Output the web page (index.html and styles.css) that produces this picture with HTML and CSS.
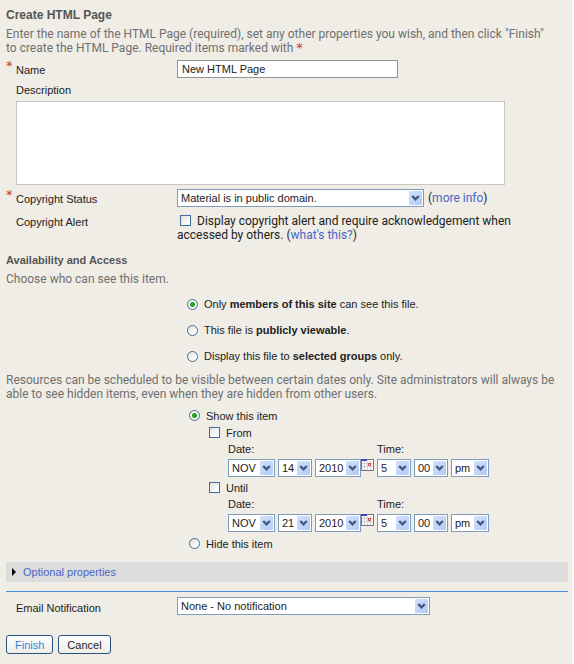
FILE: index.html
```html
<!DOCTYPE html>
<html lang="en">
<head>
<meta charset="utf-8">
<title>Create HTML Page</title>
<link rel="stylesheet" href="styles.css">
</head>
<body>
<svg class="defs" aria-hidden="true">
  <symbol id="arrow" viewBox="0 0 13 14">
    <path d="M3.2 5 L6.5 8.3 L9.8 5" fill="none" stroke="#41587f" stroke-width="2.4"/>
  </symbol>
  <symbol id="calendar" viewBox="0 0 13 12">
    <path d="M0 0H13V12H0Z" fill="#77777d"/>
    <path d="M1 1H12V11H1Z" fill="#fafafa"/>
    <path d="M3.5 2V11M6.5 2V11M9.5 2V11M1 4.5H12M1 7.5H12" stroke="#d2d2d6" fill="none"/>
    <path d="M0 0H6V2H0Z" fill="#4343b5"/>
    <path d="M7.5 4.5H9.5V6.5H7.5Z" fill="#fff" stroke="#c9403c"/>
  </symbol>
</svg>
<form class="page">
  <h3 class="title">Create HTML Page</h3>
  <p class="note">Enter the name of the HTML Page (required), set any other properties you wish, and then click "Finish"<br>to create the HTML Page. Required items marked with <span class="star">*</span></p>

  <div class="row name-row">
    <label for="name"><span class="star mark">*</span>Name</label>
    <input class="text" id="name" type="text" value="New HTML Page">
  </div>
  <div class="description">
    <label for="description">Description</label>
    <textarea id="description"></textarea>
  </div>
  <div class="row">
    <label for="status"><span class="star mark">*</span>Copyright Status</label>
    <div class="with-link">
      <span class="pick status"><select id="status"><option>Material is in public domain.</option></select><svg><use href="#arrow"/></svg></span>
      <span class="wide">(<a href="#">more info</a>)</span>
    </div>
  </div>
  <div class="row alert-row">
    <span>Copyright Alert</span>
    <div class="wide"><input type="checkbox" id="alert"><label for="alert">Display copyright alert and require acknowledgement when<br>accessed by others.</label> (<a href="#">what's this?</a>)</div>
  </div>

  <h3>Availability and Access</h3>
  <p class="note">Choose who can see this item.</p>
  <div class="access">
    <label><input type="radio" name="access" checked><span>Only <b>members of this site</b> can see this file.</span></label>
    <label><input type="radio" name="access"><span>This file is <b>publicly viewable</b>.</span></label>
    <label><input type="radio" name="access"><span>Display this file to <b>selected groups</b> only.</span></label>
  </div>
  <p class="note">Resources can be scheduled to be visible between certain dates only. Site administrators will always be<br>able to see hidden items, even when they are hidden from other users.</p>

  <div class="schedule">
    <label class="choice"><input type="radio" name="show" checked>Show this item</label>
    <div class="limit">
      <label class="choice"><input type="checkbox">From</label>
      <div class="when">
        <span class="date-label">Date:</span><span class="time-label">Time:</span>
        <div class="date">
          <span class="pick month"><select aria-label="From month"><option>NOV</option></select><svg><use href="#arrow"/></svg></span>
          <span class="pick day"><select aria-label="From day"><option>14</option></select><svg><use href="#arrow"/></svg></span>
          <span class="pick year"><select aria-label="From year"><option>2010</option></select><svg><use href="#arrow"/></svg></span>
          <button class="calendar" type="button" aria-label="Pick from date"><svg><use href="#calendar"/></svg></button>
        </div>
        <div class="time">
          <span class="pick day"><select aria-label="From hour"><option>5</option></select><svg><use href="#arrow"/></svg></span>
          <span class="pick day"><select aria-label="From minute"><option>00</option></select><svg><use href="#arrow"/></svg></span>
          <span class="pick half"><select aria-label="From am or pm"><option>pm</option></select><svg><use href="#arrow"/></svg></span>
        </div>
      </div>
    </div>
    <div class="limit">
      <label class="choice"><input type="checkbox">Until</label>
      <div class="when">
        <span class="date-label">Date:</span><span class="time-label">Time:</span>
        <div class="date">
          <span class="pick month"><select aria-label="Until month"><option>NOV</option></select><svg><use href="#arrow"/></svg></span>
          <span class="pick day"><select aria-label="Until day"><option>21</option></select><svg><use href="#arrow"/></svg></span>
          <span class="pick year"><select aria-label="Until year"><option>2010</option></select><svg><use href="#arrow"/></svg></span>
          <button class="calendar" type="button" aria-label="Pick until date"><svg><use href="#calendar"/></svg></button>
        </div>
        <div class="time">
          <span class="pick day"><select aria-label="Until hour"><option>5</option></select><svg><use href="#arrow"/></svg></span>
          <span class="pick day"><select aria-label="Until minute"><option>00</option></select><svg><use href="#arrow"/></svg></span>
          <span class="pick half"><select aria-label="Until am or pm"><option>pm</option></select><svg><use href="#arrow"/></svg></span>
        </div>
      </div>
    </div>
    <label class="choice hide"><input type="radio" name="show">Hide this item</label>
  </div>

  <div class="optional"><svg viewBox="0 0 4 8"><path d="M0 0L4 4L0 8Z"/></svg><a href="#">Optional properties</a></div>
  <div class="row email">
    <label for="email">Email Notification</label>
    <span class="pick notify"><select id="email"><option>None - No notification</option></select><svg><use href="#arrow"/></svg></span>
  </div>
  <div class="actions">
    <button class="primary" type="submit">Finish</button>
    <button type="button">Cancel</button>
  </div>
</form>
</body>
</html>
```
FILE: styles.css
```css
* { box-sizing: border-box; }
html { background: #efede6; }
body {
  margin: 0;
  border-right: 2px solid #fdfdfb;
  min-height: 100vh;
  background: #efede6;
  color: #222;
  font: 11px/14px "Liberation Sans", Arial, sans-serif;
}
.defs { display: none; }
.page { padding: 8px 4px 10px 6px; }
h3 { margin: 0; color: #555; font-size: 11px; line-height: 14px; }
.title { font-size: 12px; }
.note {
  margin: 4px 0 0;
  color: #707070;
  font: 12px/14px Roboto, Verdana, sans-serif;
  white-space: nowrap;
}
a { color: #4a66c4; text-decoration: none; }
.star { color: #d12a2a; font: 13px/12px "DejaVu Sans", sans-serif; }
.mark { position: absolute; left: -10px; top: 0; }

.row { display: grid; grid-template-columns: 161px 1fr; padding-left: 10px; min-height: 18px; }
.row > :first-child { position: relative; padding-top: 3px; }
.name-row { margin-top: 5px; }
.wide { font: 12px/14px Roboto, Verdana, sans-serif; white-space: nowrap; }
.with-link { display: flex; align-items: center; gap: 4px; }

input, select, textarea, button { margin: 0; color: #222; font: 11px "Liberation Sans", Arial, sans-serif; }
.text { width: 221px; height: 18px; padding: 0 4px; border: 1px solid #8e9596; background: #fff; }
.description { margin: 5px 63px 4px 10px; }
.description label { display: block; margin-bottom: 4px; }
textarea { display: block; width: 100%; height: 84px; border: 1px solid #c5c7c3; background: #fff; resize: none; }
.alert-row { margin-top: 7px; }
.alert-row > :first-child { padding-top: 1px; }
.alert-row input { margin: 0 6px 0 3px; vertical-align: -1px; }
.alert-row + h3 { margin-top: 11px; }
h3 + .note { margin-top: 5px; }

.pick { display: grid; height: 18px; }
.pick > * { grid-area: 1 / 1; }
.pick select { appearance: none; width: 100%; height: 18px; padding: 0 3px; border: 1px solid #7f9db9; border-radius: 0; background: #fff; }
.pick svg { width: 13px; height: 14px; margin: 2px; justify-self: end; border-radius: 1px; background: linear-gradient(135deg, #d3e0fd, #b3caf5); pointer-events: none; }
.status { width: 247px; }
.notify { width: 253px; }
.month { width: 47px; }
.day { width: 34px; }
.year { width: 46px; }
.half { width: 38px; }

input[type=radio], input[type=checkbox] { appearance: none; flex: none; width: 11px; height: 11px; border: 1px solid #3f6e9c; background: linear-gradient(135deg, #dedfdc, #fff 80%); }
input[type=radio] { border-radius: 50%; }
input[type=radio]:checked { background: radial-gradient(circle, #21a121 0 2px, #f5f5f2 3px); }
.access { display: grid; gap: 12px; margin: 11px 0 10px 181px; }
.access label { display: flex; align-items: center; gap: 6px; }
.schedule { margin: 6px 0 0 183px; }
.choice { display: flex; align-items: center; gap: 6px; height: 17px; }
.limit { margin-left: 20px; }
.when { display: grid; grid-template-columns: 149px 1fr; margin-left: 19px; row-gap: 3px; padding-top: 1px; }
.limit + .limit { margin-top: 2px; }
.date, .time { display: flex; gap: 3px; }
.calendar { width: 13px; height: 12px; padding: 0; margin-left: -3px; border: 0; background: none; }
.calendar svg { display: block; width: 13px; height: 12px; }
.hide { margin-top: 3px; }

.optional { display: flex; align-items: center; gap: 7px; height: 20px; margin-top: 10px; padding-left: 6px; background: #dcdcdc; }
.optional svg { width: 4px; height: 8px; }
.email { margin-top: 9px; padding-top: 5px; border-top: 1px solid #438fe5; }
.email > :first-child { padding-top: 4px; }
.actions { display: flex; gap: 5px; margin-top: 20px; }
.actions button { height: 19px; padding: 0 8px; border: 1px solid #29537f; border-radius: 3px; background: linear-gradient(#fff, #efede7); }
.actions .primary { color: #2e86dd; }
```
